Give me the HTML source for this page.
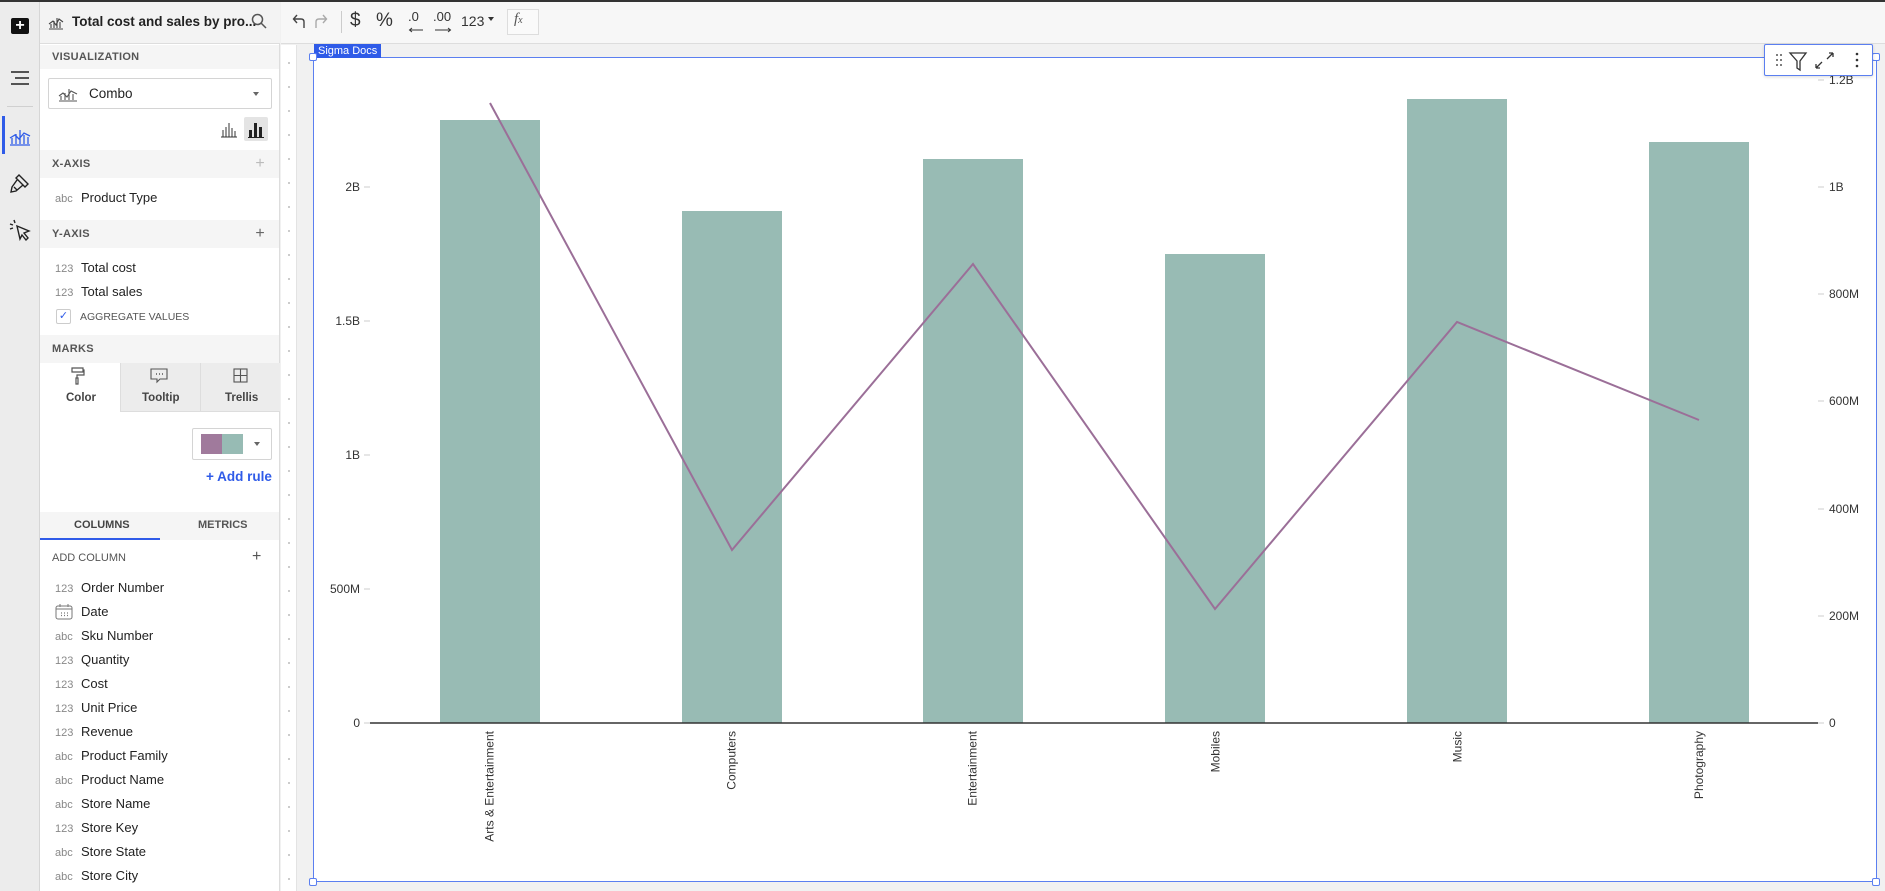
<!DOCTYPE html>
<html><head><meta charset="utf-8">
<style>
*{box-sizing:border-box;margin:0;padding:0}
body{width:1885px;height:891px;overflow:hidden;background:#f1f1f1;font-family:"Liberation Sans",sans-serif;position:relative;color:#222}
.abs{position:absolute}
#topline{left:0;top:0;width:1885px;height:2px;background:#333}
#rail{left:0;top:2px;width:40px;height:889px;background:#ececec;border-right:1px solid #d6d6d6}
#panel{left:40px;top:2px;width:240px;height:889px;background:#fff;border-right:1px solid #ddd}
#hdr{left:40px;top:2px;width:240px;height:42px;background:#f3f3f3;border-bottom:1px solid #ddd}
#toolbar{left:281px;top:2px;width:1604px;height:42px;background:#f7f7f7;border-bottom:1px solid #ddd}
.sec{position:absolute;left:40px;width:239px;background:#f5f5f5;font-size:11px;font-weight:bold;color:#555;letter-spacing:.3px;padding-left:12px}
.item{position:absolute;left:55px;font-size:13px;color:#222;white-space:nowrap}
.item .t{display:inline-block;width:26px;font-size:11px;color:#888}
.plus{position:absolute;right:14px;font-size:16px;color:#666;font-weight:normal}
.ylab{position:absolute;font-size:12px;color:#333;text-align:right;width:40px}
.rlab{position:absolute;font-size:12px;color:#333}
.cat{position:absolute;font-size:12px;color:#333;white-space:nowrap;transform:rotate(-90deg);transform-origin:right center;text-align:right}
</style></head><body>
<div class="abs" id="topline"></div>
<div class="abs" id="rail"></div>
<div class="abs" style="left:11px;top:18px;width:18px;height:16px;background:#111;border-radius:2px;color:#fff;font-size:16px;line-height:15px;text-align:center;font-weight:bold">+</div>
<svg class="abs" style="left:10px;top:70px" width="20" height="16"><path d="M1 2H19M5 8H19M1 14H19" stroke="#222" stroke-width="1.6"/></svg>
<div class="abs" style="left:7px;top:106px;width:26px;height:1px;background:#d0d0d0"></div>
<div class="abs" style="left:2px;top:116px;width:3px;height:38px;background:#2f5be8"></div>
<svg class="abs" style="left:9px;top:126px" width="22" height="20" fill="none" stroke="#2f5be8" stroke-width="1.3"><path d="M1 19H21M3 18V12M7 18V8M11 18V4M15 18V9M19 18V11M1 12L6 9 10 13 15 7 21 10"/></svg>
<svg class="abs" style="left:9px;top:172px" width="22" height="22" fill="none" stroke="#222" stroke-width="1.4"><path d="M10 3L19 12 16 15 7 6ZM8 8L3 15 2 20 7 19 14 13M5 15L8 18"/></svg>
<svg class="abs" style="left:8px;top:219px" width="24" height="22" fill="none" stroke="#222" stroke-width="1.4"><path d="M9 7L21 12 16 14 20 19 18 21 14 16 12 20Z M2 5L5 6M6 1L7 4M2 10L5 9"/></svg>

<div class="abs" id="panel"></div>
<div class="abs" id="hdr"></div>
<svg class="abs" style="left:48px;top:14px" width="16" height="16" fill="none" stroke="#444" stroke-width="1.1"><path d="M1 15H15M3 14V10M6 14V7M9 14V4M12 14V8M1 10L5 7 8 11 11 5 15 8"/></svg>
<div class="abs" style="left:72px;top:14px;font-size:13.5px;font-weight:bold;color:#222">Total cost and sales by pro...</div>
<svg class="abs" style="left:251px;top:13px" width="16" height="16" fill="none" stroke="#555" stroke-width="1.5"><circle cx="6.5" cy="6.5" r="5"/><path d="M10 10L15 15"/></svg>

<div class="abs" id="toolbar"></div>
<svg class="abs" style="left:292px;top:13px" width="60" height="18" fill="none" stroke-width="1.4"><path d="M12 15V9C12 7 11 6 9 6H2M5 2L1.5 6 5 10" stroke="#444"/><path d="M24 15V9C24 7 25 6 27 6H34M31 2L34.5 6 31 10" stroke="#aaa"/></svg>
<div class="abs" style="left:341px;top:11px;width:1px;height:22px;background:#ccc"></div>
<div class="abs" style="left:350px;top:10px;font-size:19px;color:#333">$</div>
<div class="abs" style="left:376px;top:10px;font-size:19px;color:#333">%</div>
<div class="abs" style="left:408px;top:9px;font-size:13px;color:#333">.0</div>
<svg class="abs" style="left:408px;top:27px" width="16" height="6" fill="none" stroke="#333"><path d="M2 3H15M4 1L1.5 3 4 5"/></svg>
<div class="abs" style="left:433px;top:9px;font-size:13px;color:#333">.00</div>
<svg class="abs" style="left:434px;top:27px" width="18" height="6" fill="none" stroke="#333"><path d="M1 3H16M14 1L16.5 3 14 5"/></svg>
<div class="abs" style="left:461px;top:13px;font-size:14px;color:#333">123</div>
<div class="abs" style="left:488px;top:17px;width:0;height:0;border-left:3px solid transparent;border-right:3px solid transparent;border-top:4px solid #333"></div>
<div class="abs" style="left:507px;top:9px;width:32px;height:26px;border:1px solid #ddd;background:#fafafa"></div>
<div class="abs" style="left:514px;top:11px;font-size:15px;color:#555;font-style:italic;font-family:'Liberation Serif',serif">f<span style="font-size:10px">x</span></div>

<div class="sec" style="top:45px;height:24px;line-height:24px">VISUALIZATION</div>
<div class="abs" style="left:48px;top:78px;width:224px;height:31px;border:1px solid #d4d4d4;border-radius:2px;background:#fff"></div>
<svg class="abs" style="left:58px;top:86px" width="20" height="16" fill="none" stroke="#555" stroke-width="1.1"><path d="M1 15H19M3 14V10M7 14V7M11 14V3M15 14V8M1 10L5 7 9 11 13 5 19 8"/></svg>
<div class="abs" style="left:89px;top:86px;font-size:13.5px;color:#222">Combo</div>
<div class="abs" style="left:253px;top:92px;border-left:3.5px solid transparent;border-right:3.5px solid transparent;border-top:4px solid #666"></div>
<svg class="abs" style="left:220px;top:120px" width="18" height="18" fill="none" stroke="#333" stroke-width="1"><path d="M1 17H17M3 17V10M6 17V7M9 17V3M12 17V8M15 17V11"/></svg>
<div class="abs" style="left:244px;top:117px;width:24px;height:24px;background:#e4e4e4;border-radius:2px"></div>
<svg class="abs" style="left:247px;top:120px" width="18" height="18"><path d="M1 17.5H17" stroke="#222"/><rect x="2" y="10" width="3" height="7" fill="#222"/><rect x="7" y="3" width="3" height="14" fill="#222"/><rect x="12" y="7" width="3" height="10" fill="#222"/></svg>

<div class="sec" style="top:150px;height:28px;line-height:28px">X-AXIS<span class="plus" style="color:#bbb">+</span></div>
<div class="item" style="top:190px"><span class="t">abc</span>Product Type</div>
<div class="sec" style="top:220px;height:28px;line-height:28px">Y-AXIS<span class="plus">+</span></div>
<div class="item" style="top:260px"><span class="t">123</span>Total cost</div>
<div class="item" style="top:284px"><span class="t">123</span>Total sales</div>
<div class="abs" style="left:56px;top:309px;width:15px;height:15px;border:1px solid #ccc;border-radius:2px;color:#2f5be8;font-size:11px;line-height:13px;text-align:center">✓</div>
<div class="abs" style="left:80px;top:311px;font-size:10.5px;color:#555">AGGREGATE VALUES</div>

<div class="sec" style="top:335px;height:28px;line-height:28px">MARKS</div>
<div class="abs" style="left:120px;top:363px;width:160px;height:49px;background:#ececec;border-bottom:1px solid #ddd"></div>
<div class="abs" style="left:200px;top:363px;width:1px;height:49px;background:#ddd"></div>
<div class="abs" style="left:120px;top:363px;width:1px;height:49px;background:#ddd"></div>
<svg class="abs" style="left:71px;top:367px" width="14" height="18" fill="none" stroke="#555" stroke-width="1.2"><path d="M1 1H12V5H1ZM12 3H13V8H6V11M5 11H7V17H5Z"/></svg>
<div class="abs" style="left:66px;top:392px;font-size:11.5px;font-weight:bold;color:#444">Color</div>
<svg class="abs" style="left:150px;top:368px" width="18" height="16" fill="none" stroke="#555" stroke-width="1.1"><path d="M1 1H17V11H10L7 14V11H1Z"/><path d="M6 6h1M9 6h1M12 6h1" stroke-width="1.4"/></svg>
<div class="abs" style="left:142px;top:392px;font-size:11.5px;font-weight:bold;color:#444">Tooltip</div>
<svg class="abs" style="left:233px;top:368px" width="15" height="15" fill="none" stroke="#555" stroke-width="1.1"><rect x="1" y="1" width="13" height="13"/><path d="M7.5 1V14M1 7.5H14"/></svg>
<div class="abs" style="left:225px;top:392px;font-size:11.5px;font-weight:bold;color:#444">Trellis</div>

<div class="abs" style="left:192px;top:428px;width:80px;height:32px;border:1px solid #d4d4d4;border-radius:2px;background:#fff"></div>
<div class="abs" style="left:201px;top:434px;width:21px;height:20px;background:#a07a9c"></div>
<div class="abs" style="left:222px;top:434px;width:21px;height:20px;background:#97bbb4"></div>
<div class="abs" style="left:254px;top:442px;border-left:3.5px solid transparent;border-right:3.5px solid transparent;border-top:4px solid #666"></div>
<div class="abs" style="left:206px;top:469px;font-size:13.5px;font-weight:bold;color:#2f5be8">+ Add rule</div>

<div class="abs" style="left:40px;top:512px;width:239px;height:28px;background:#f5f5f5"></div>
<div class="abs" style="left:40px;top:538px;width:120px;height:2px;background:#2f5be8"></div>
<div class="abs" style="left:74px;top:519px;font-size:11px;font-weight:bold;color:#444">COLUMNS</div>
<div class="abs" style="left:198px;top:519px;font-size:11px;font-weight:bold;color:#555">METRICS</div>
<div class="abs" style="left:52px;top:552px;font-size:11px;color:#555">ADD COLUMN</div>
<div class="abs" style="left:252px;top:548px;font-size:16px;color:#555">+</div>

<div class="item" style="top:580px"><span class="t">123</span>Order Number</div>
<svg class="abs" style="left:55px;top:603px" width="18" height="17" fill="none" stroke="#777" stroke-width="1"><rect x="1" y="3" width="16" height="13" rx="2"/><path d="M1 6H17M5 1V4M13 1V4"/><path d="M6 10h1M9 10h1M12 10h1M6 12.5h1M9 12.5h1M12 12.5h1" stroke-width="1.2"/></svg>
<div class="item" style="top:604px"><span class="t"></span>Date</div>
<div class="item" style="top:628px"><span class="t">abc</span>Sku Number</div>
<div class="item" style="top:652px"><span class="t">123</span>Quantity</div>
<div class="item" style="top:676px"><span class="t">123</span>Cost</div>
<div class="item" style="top:700px"><span class="t">123</span>Unit Price</div>
<div class="item" style="top:724px"><span class="t">123</span>Revenue</div>
<div class="item" style="top:748px"><span class="t">abc</span>Product Family</div>
<div class="item" style="top:772px"><span class="t">abc</span>Product Name</div>
<div class="item" style="top:796px"><span class="t">abc</span>Store Name</div>
<div class="item" style="top:820px"><span class="t">123</span>Store Key</div>
<div class="item" style="top:844px"><span class="t">abc</span>Store State</div>
<div class="item" style="top:868px"><span class="t">abc</span>Store City</div>

<div class="abs" style="left:281px;top:45px;width:16px;height:846px;background:#fff;border-right:1px solid #e3e3e3;background-image:radial-gradient(circle,#bbb 0.8px,transparent 1px);background-size:16px 24px;background-position:0 6px"></div>
<div class="abs" style="left:313px;top:57px;width:1564px;height:825px;background:#fff;border:1.5px solid #5b7ff0"></div>
<div class="abs" style="left:314px;top:44px;width:67px;height:14px;background:#2f5be8;color:#fff;font-size:11px;line-height:14px;padding-left:4px">Sigma Docs</div>
<div class="abs" style="left:309px;top:53px;width:8px;height:8px;border:1.5px solid #5b7ff0;background:#fff;border-radius:2px"></div>
<div class="abs" style="left:1872px;top:53px;width:8px;height:8px;border:1.5px solid #5b7ff0;background:#fff;border-radius:2px"></div>
<div class="abs" style="left:309px;top:878px;width:8px;height:8px;border:1.5px solid #5b7ff0;background:#fff;border-radius:2px"></div>
<div class="abs" style="left:1872px;top:878px;width:8px;height:8px;border:1.5px solid #5b7ff0;background:#fff;border-radius:2px"></div>

<svg class="abs" style="left:0;top:0" width="1885" height="891">
 <g fill="#98bbb4">
  <rect x="440" y="120" width="100" height="603"/>
  <rect x="682" y="211" width="100" height="512"/>
  <rect x="923" y="159" width="100" height="564"/>
  <rect x="1165" y="254" width="100" height="469"/>
  <rect x="1407" y="99" width="100" height="624"/>
  <rect x="1649" y="142" width="100" height="581"/>
 </g>
 <path d="M370 723H1818" stroke="#333" stroke-width="1.5"/>
 <g stroke="#ccc" stroke-width="1"><path d="M364 187h6M364 321h6M364 455h6M364 589h6M364 723h6M1818 80h6M1818 187h6M1818 294h6M1818 401h6M1818 509h6M1818 616h6M1818 723h6"/></g>
 <polyline points="490,103 732,550 973,264 1215,609 1457,322 1699,420" fill="none" stroke="#9b6f98" stroke-width="2"/>
</svg>
<div class="ylab" style="left:320px;top:180px">2B</div>
<div class="ylab" style="left:320px;top:314px">1.5B</div>
<div class="ylab" style="left:320px;top:448px">1B</div>
<div class="ylab" style="left:320px;top:582px">500M</div>
<div class="ylab" style="left:320px;top:716px">0</div>
<div class="rlab" style="left:1829px;top:73px">1.2B</div>
<div class="rlab" style="left:1829px;top:180px">1B</div>
<div class="rlab" style="left:1829px;top:287px">800M</div>
<div class="rlab" style="left:1829px;top:394px">600M</div>
<div class="rlab" style="left:1829px;top:502px">400M</div>
<div class="rlab" style="left:1829px;top:609px">200M</div>
<div class="rlab" style="left:1829px;top:716px">0</div>

<div class="cat" style="right:1395px;top:724px">Arts &amp; Entertainment</div>
<div class="cat" style="right:1153px;top:724px">Computers</div>
<div class="cat" style="right:912px;top:724px">Entertainment</div>
<div class="cat" style="right:670px;top:724px">Mobiles</div>
<div class="cat" style="right:428px;top:724px">Music</div>
<div class="cat" style="right:186px;top:724px">Photography</div>

<div class="abs" style="left:1764px;top:44px;width:109px;height:32px;background:#fff;border:1.5px solid #5b7ff0;border-radius:2px;box-shadow:0 1px 3px rgba(0,0,0,.15)"></div>
<svg class="abs" style="left:1770px;top:50px" width="100" height="22" fill="none" stroke="#333" stroke-width="1.3">
 <g fill="#555" stroke="none"><circle cx="7" cy="5" r="1"/><circle cx="11" cy="5" r="1"/><circle cx="7" cy="10" r="1"/><circle cx="11" cy="10" r="1"/><circle cx="7" cy="15" r="1"/><circle cx="11" cy="15" r="1"/></g>
 <path d="M20 3H36L30 11V20L27 18V11Z"/>
 <path d="M46 18L52 12M46 18V14M46 18H50M63 3L57 9M63 3V7M63 3H59"/>
 <g fill="#333" stroke="none"><circle cx="87" cy="4" r="1.3"/><circle cx="87" cy="10" r="1.3"/><circle cx="87" cy="16" r="1.3"/></g>
</svg>
</body></html>
